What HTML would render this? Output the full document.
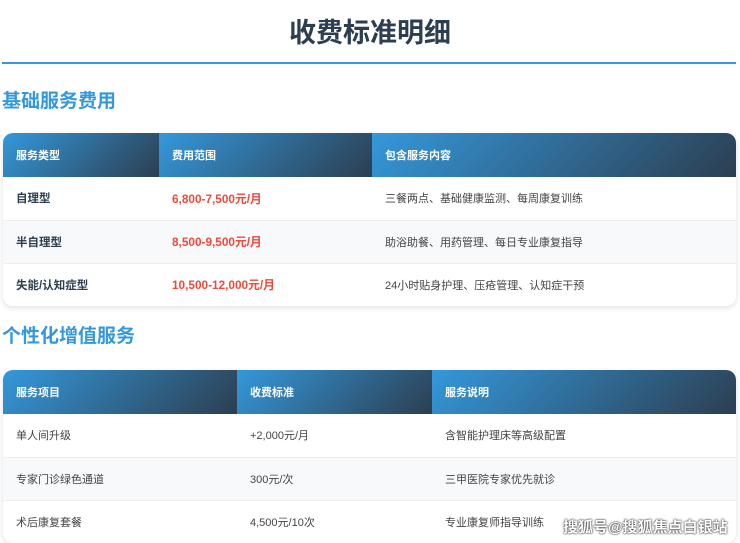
<!DOCTYPE html>
<html><head><meta charset="utf-8"><style>
*{margin:0;padding:0;box-sizing:border-box}
body{width:740px;height:542px;overflow:hidden;background:#fff;font-family:"Liberation Sans","Noto Sans CJK SC",sans-serif;color:#333;position:relative}
.t{position:absolute;left:0;width:740px;top:14px;text-align:center;font-size:27px;font-weight:bold;color:#2c3e50;line-height:38px}
.line{position:absolute;left:2px;width:734px;top:62px;height:2px;background:#3498db}
h2{position:absolute;left:2px;font-size:19px;font-weight:bold;color:#3498db;line-height:26px}
.tb{position:absolute;left:3px;width:733px;border-radius:10px;overflow:hidden;box-shadow:0 2px 6px rgba(0,0,0,.12);background:#fff}
table{border-collapse:collapse;width:100%}
th{height:44px;text-align:left;padding-left:13px;color:#fff;font-size:11px;font-weight:bold;background:linear-gradient(135deg,#3498db,#2c3e50)}
td{height:43px;padding-left:13px;font-size:11px;color:#444;border-bottom:1px solid #eee;background:#fff}
tr:nth-child(3) td{background:#f8f9fa}
tr:last-child td{border-bottom:none}
.b{font-weight:bold;color:#2c3e50;font-size:11.5px}
.r{font-weight:bold;color:#e74c3c;font-size:11.8px}
.wm{position:absolute;left:563px;top:516px;font-size:15px;font-weight:bold;color:#fff;text-shadow:0 0 2px #333,0 0 1px #000}
</style></head><body>
<div class="t">收费标准明细</div>
<div class="line"></div>
<h2 style="top:89px">基础服务费用</h2>
<div class="tb" style="top:133px"><table>
<tr><th style="width:156px">服务类型</th><th style="width:213px">费用范围</th><th>包含服务内容</th></tr>
<tr><td class="b">自理型</td><td class="r">6,800-7,500元/月</td><td>三餐两点、基础健康监测、每周康复训练</td></tr>
<tr><td class="b" style="height:42px">半自理型</td><td class="r">8,500-9,500元/月</td><td>助浴助餐、用药管理、每日专业康复指导</td></tr>
<tr><td class="b">失能/认知症型</td><td class="r">10,500-12,000元/月</td><td>24小时贴身护理、压疮管理、认知症干预</td></tr>
</table></div>
<h2 style="top:324px">个性化增值服务</h2>
<div class="tb" style="top:370px"><table>
<tr><th style="width:234px">服务项目</th><th style="width:195px">收费标准</th><th>服务说明</th></tr>
<tr><td>单人间升级</td><td>+2,000元/月</td><td>含智能护理床等高级配置</td></tr>
<tr><td style="height:42px">专家门诊绿色通道</td><td>300元/次</td><td>三甲医院专家优先就诊</td></tr>
<tr><td>术后康复套餐</td><td>4,500元/10次</td><td>专业康复师指导训练</td></tr>
</table></div>
<div class="wm">搜狐号@搜狐焦点白银站</div>
</body></html>
